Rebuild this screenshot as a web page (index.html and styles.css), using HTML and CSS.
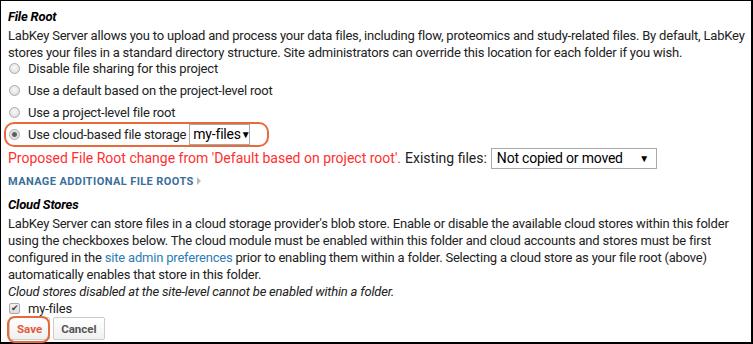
FILE: index.html
```html
<!DOCTYPE html>
<html lang="en">
<head>
    <meta charset="UTF-8">
    <title>File Root</title>
    <link rel="stylesheet" href="styles.css">
</head>
<body>
    <div class="panel">
        <div class="section-title">File Root</div>
        <p class="desc">LabKey Server allows you to upload and process your data files, including flow, proteomics and study-related files. By default, LabKey stores your files in a standard directory structure. Site administrators can override this location for each folder if you wish.</p>

        <div class="options">
            <div class="option"><span class="radio"></span>Disable file sharing for this project</div>
            <div class="option"><span class="radio"></span>Use a default based on the project-level root</div>
            <div class="option"><span class="radio"></span>Use a project-level file root</div>
            <div class="option">
                <span class="radio checked"></span>Use cloud-based file storage
                <span class="dropdown small">my-files<span class="caret">&#9660;</span></span>
                <span class="highlight"></span>
            </div>
        </div>

        <div class="proposed">
            <span class="warn">Proposed File Root change from 'Default based on project root'.</span>
            <span class="label">Existing files:</span>
            <span class="dropdown wide">Not copied or moved<span class="caret">&#9660;</span></span>
        </div>

        <div class="manage">Manage additional file roots <span class="arrow"></span></div>

        <div class="section-title cloud-title">Cloud Stores</div>
        <p class="desc">LabKey Server can store files in a cloud storage provider's blob store. Enable or disable the available cloud stores within this folder using the checkboxes below. The cloud module must be enabled within this folder and cloud accounts and stores must be first configured in the <a href="#">site admin preferences</a> prior to enabling them within a folder. Selecting a cloud store as your file root (above) automatically enables that store in this folder.</p>
        <p class="note">Cloud stores disabled at the site-level cannot be enabled within a folder.</p>

        <div class="check-row"><span class="checkbox">&#10004;</span>my-files</div>

        <div class="buttons">
            <button class="btn btn-save">Save<span class="highlight"></span></button>
            <button class="btn btn-cancel">Cancel</button>
        </div>
    </div>
</body>
</html>
```

FILE: styles.css
```css
body {
    margin: 0;
    font-family: Roboto, 'Liberation Sans', sans-serif;
    font-size: 13px;
    color: #222;
    background: #fff;
}
.panel {
    box-sizing: border-box;
    width: 753px;
    height: 344px;
    border: 1px solid #000;
    border-width: 1px 2px 2px 1px;
    padding: 6px 6px 0 7px;
    line-height: 17px;
    letter-spacing: -0.2px;
}
.section-title {
    font-weight: bold;
    font-style: italic;
    color: #000;
    line-height: 20px;
}
.cloud-title {
    margin-top: 3px;
}
.desc {
    margin: 0;
}
.desc a {
    color: #2d7db3;
    text-decoration: none;
}
.note {
    margin: 0;
    font-style: italic;
}
.options {
    margin-top: -4px;
}
.option {
    position: relative;
    display: flex;
    align-items: center;
    height: 22px;
    white-space: nowrap;
}
.radio {
    box-sizing: border-box;
    width: 11px;
    height: 11px;
    margin: 0 8px 0 1px;
    border: 1px solid #aaa;
    border-radius: 50%;
    background: radial-gradient(circle at 50% 40%, #fafafa, #d8d8d8);
}
.radio.checked {
    background: radial-gradient(circle, #555 0, #666 2px, #ddd 3px, #eee 5px);
}
.dropdown {
    box-sizing: border-box;
    display: inline-flex;
    align-items: center;
    justify-content: space-between;
    height: 21px;
    border: 1px solid #a9a9a9;
    background: #fff;
    color: #000;
    padding: 0 3px;
    font-size: 14px;
    letter-spacing: -0.2px;
    white-space: nowrap;
}
.dropdown.small {
    margin-left: 3px;
    width: 61px;
}
.dropdown.wide {
    width: 166px;
    margin-left: 4px;
    padding-left: 5px;
    padding-right: 7px;
}
.caret {
    font-size: 10px;
}
.highlight {
    position: absolute;
    left: -4px;
    top: -1px;
    width: 261px;
    height: 21px;
    border: 2px solid #e86a3a;
    border-radius: 10px;
    pointer-events: none;
}
.proposed {
    display: flex;
    align-items: center;
    height: 24px;
    margin-top: 1px;
    font-size: 14px;
    letter-spacing: 0;
    color: #222;
    white-space: nowrap;
}
.warn {
    color: #ff2f2f;
    margin-right: 4px;
}
.manage {
    display: flex;
    align-items: center;
    height: 22px;
    color: #3a6f9a;
    font-size: 11px;
    font-weight: bold;
    text-transform: uppercase;
    letter-spacing: 0.4px;
}
.arrow {
    display: inline-block;
    width: 0;
    height: 0;
    margin-left: 3px;
    border-left: 4px solid #bbb;
    border-top: 4px solid transparent;
    border-bottom: 4px solid transparent;
}
.check-row {
    display: flex;
    align-items: center;
    height: 17px;
}
.checkbox {
    box-sizing: border-box;
    width: 11px;
    height: 11px;
    margin: 0 8px 0 1px;
    border: 1px solid #aaa;
    border-radius: 2px;
    background: linear-gradient(#f4f4f4, #dcdcdc);
    color: #444;
    font-size: 9px;
    line-height: 9px;
    text-align: center;
}
.buttons {
    display: flex;
    gap: 3px;
}
.btn {
    position: relative;
    height: 23px;
    padding: 0 7px;
    border: 1px solid #ccc;
    border-radius: 2px;
    background: linear-gradient(#fff, #f0f0f0);
    font-family: Roboto, 'Liberation Sans', sans-serif;
    font-size: 11.5px;
    font-weight: bold;
    letter-spacing: 0;
    color: #555;
}
.btn-save {
    color: #e55a3c;
    margin-left: 1px;
}
.btn-save .highlight {
    left: -3px;
    top: -2px;
    width: 39px;
    height: 23px;
    border-radius: 8px;
}
```
